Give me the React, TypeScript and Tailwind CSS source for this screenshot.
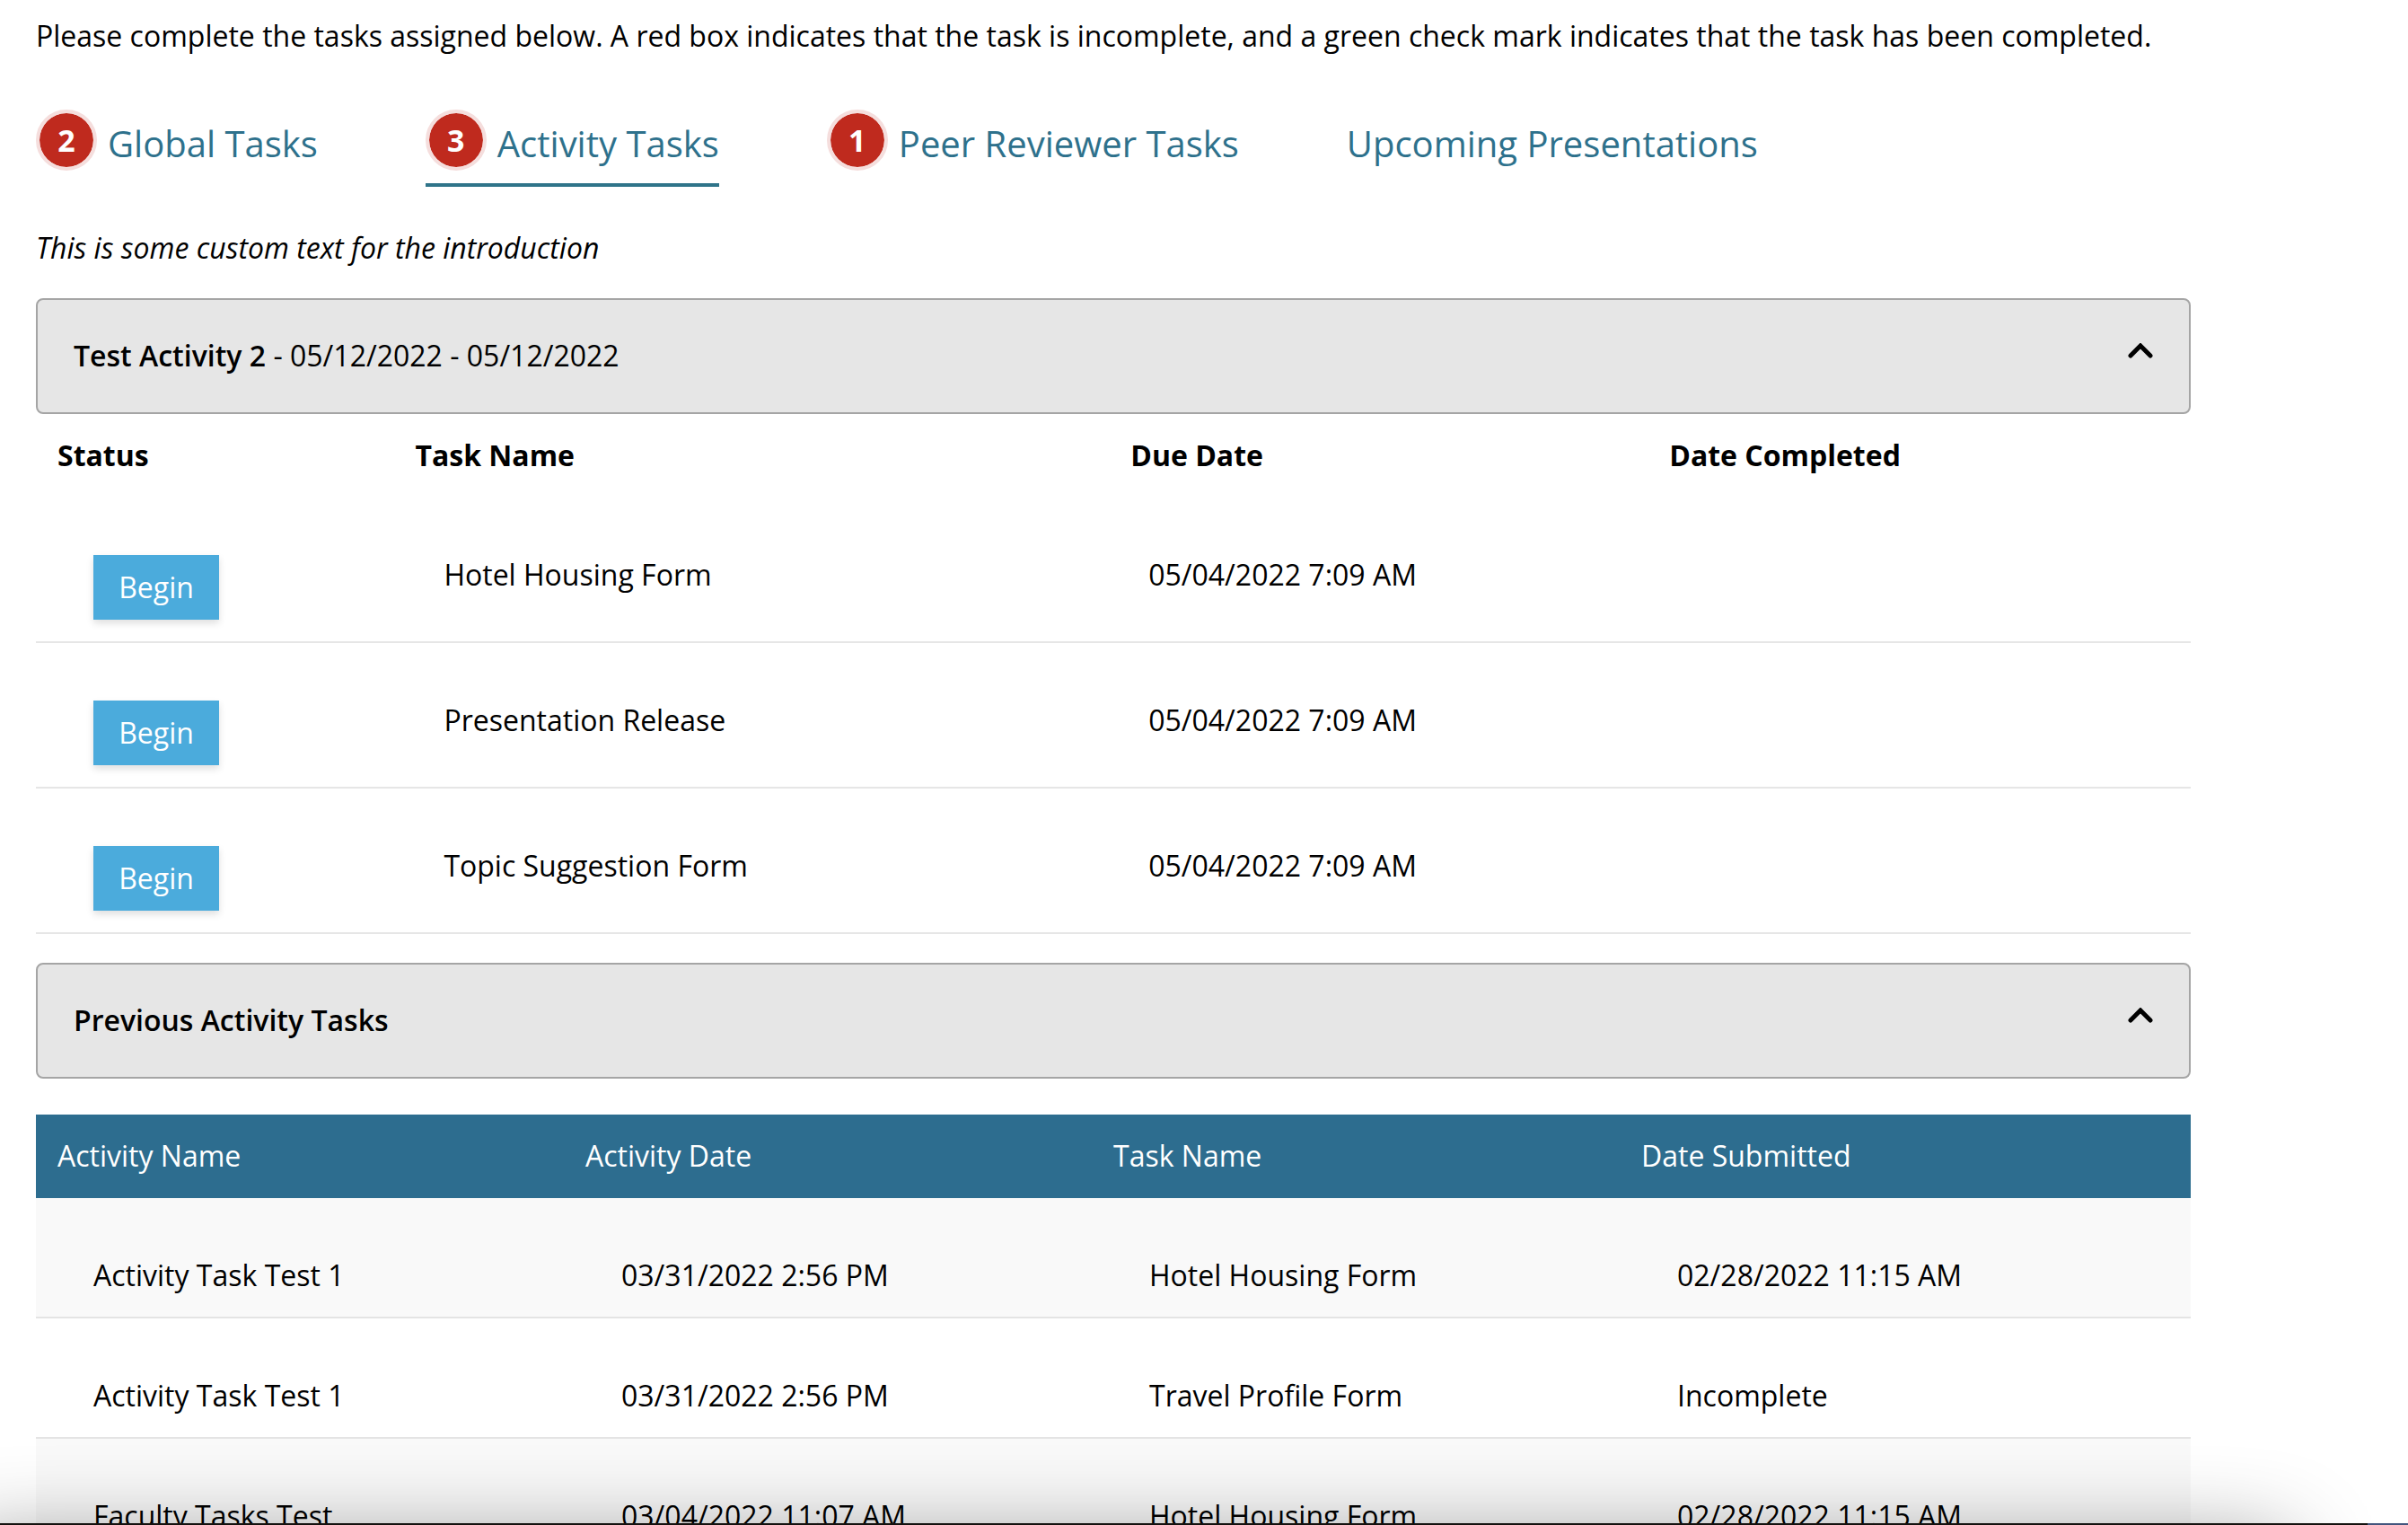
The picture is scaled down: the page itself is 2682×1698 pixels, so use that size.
import { useState } from "react";

const tabs = [
  { label: "Global Tasks", count: 2 },
  { label: "Activity Tasks", count: 3 },
  { label: "Peer Reviewer Tasks", count: 1 },
  { label: "Upcoming Presentations" },
];

const openTasks = [
  { name: "Hotel Housing Form", due: "05/04/2022 7:09 AM" },
  { name: "Presentation Release", due: "05/04/2022 7:09 AM" },
  { name: "Topic Suggestion Form", due: "05/04/2022 7:09 AM" },
];

const previousTasks = [
  ["Activity Task Test 1", "03/31/2022 2:56 PM", "Hotel Housing Form", "02/28/2022 11:15 AM"],
  ["Activity Task Test 1", "03/31/2022 2:56 PM", "Travel Profile Form", "Incomplete"],
  ["Faculty Tasks Test", "03/04/2022 11:07 AM", "Hotel Housing Form", "02/28/2022 11:15 AM"],
];

function Chevron({ open }: { open: boolean }) {
  return (
    <svg
      viewBox="0 0 28 17"
      className={open ? "mb-3 h-[17px] w-7" : "mb-3 h-[17px] w-7 rotate-180"}
      fill="none"
      stroke="currentColor"
      strokeWidth="5"
      strokeLinecap="round"
      aria-hidden="true"
    >
      <path d="M3 14 14 3 25 14" />
    </svg>
  );
}

function PanelHeader({
  title,
  detail,
  open,
  onToggle,
}: {
  title: string;
  detail?: string;
  open: boolean;
  onToggle: () => void;
}) {
  return (
    <button
      type="button"
      aria-expanded={open}
      onClick={onToggle}
      className="flex w-full items-center justify-between rounded-lg border-2 border-[#a5a5a5] bg-[#e6e6e6] px-10 pt-10 pb-[41px] text-left"
    >
      <span>
        <span className="font-semibold">{title}</span>
        {detail}
      </span>
      <Chevron open={open} />
    </button>
  );
}

export default function App() {
  const [active, setActive] = useState("Activity Tasks");
  const [currentOpen, setCurrentOpen] = useState(true);
  const [previousOpen, setPreviousOpen] = useState(true);

  return (
    <div className="relative h-screen overflow-hidden bg-white font-['Open_Sans',sans-serif] text-[32px] leading-[44px] text-black">
      <main className="mr-[242px] ml-10 pt-[18px]">
        <p>
          Please complete the tasks assigned below. A red box indicates that the task is incomplete, and a green check
          mark indicates that the task has been completed.
        </p>

        <nav className="mt-[60px] flex gap-[120px] text-[40px]">
          {tabs.map((tab) => (
            <a
              key={tab.label}
              href="#"
              onClick={() => setActive(tab.label)}
              className={
                tab.label === active
                  ? "flex h-[86px] items-start border-b-4 border-[#2f7489] text-[#2e718c]"
                  : "flex h-[86px] items-start text-[#2e718c]"
              }
            >
              {tab.count && (
                <span className="mr-3 flex size-[68px] items-center justify-center rounded-full border-4 border-[#f5dedd] bg-[#bf2a1e] bg-clip-padding text-[34px] font-bold text-white">
                  {tab.count}
                </span>
              )}
              <span className="pt-2.5 leading-[56px]">{tab.label}</span>
            </a>
          ))}
        </nav>

        <p className="mt-[46px] mb-[34px] italic">This is some custom text for the introduction</p>

        <PanelHeader
          title="Test Activity 2"
          detail=" - 05/12/2022 - 05/12/2022"
          open={currentOpen}
          onToggle={() => setCurrentOpen(!currentOpen)}
        />
        {currentOpen && (
          <table className="w-full table-fixed border-collapse text-left">
            <thead>
              <tr className="font-bold">
                <th className="w-[16.6%] px-6 pt-6 pb-[25px]">Status</th>
                <th className="w-[33.2%] px-6 pt-6 pb-[25px]">Task Name</th>
                <th className="w-[25%] px-6 pt-6 pb-[25px]">Due Date</th>
                <th className="px-6 pt-6 pb-[25px]">Date Completed</th>
              </tr>
            </thead>
            <tbody>
              {openTasks.map((task) => (
                <tr key={task.name} className="border-b-2 border-[#e6e6e6] align-top">
                  <td className="pt-16 pb-6 pl-16">
                    <button
                      type="button"
                      className="block h-[72px] w-[140px] bg-[#4babdc] text-white shadow-[0_4px_8px_rgba(0,0,0,0.13)]"
                    >
                      Begin
                    </button>
                  </td>
                  <td className="pt-16 pb-6 pl-14">{task.name}</td>
                  <td className="pt-16 pb-6 pl-11">{task.due}</td>
                  <td />
                </tr>
              ))}
            </tbody>
          </table>
        )}

        <div className="mt-8">
          <PanelHeader
            title="Previous Activity Tasks"
            open={previousOpen}
            onToggle={() => setPreviousOpen(!previousOpen)}
          />
        </div>
        {previousOpen && (
          <table className="mt-10 w-full table-fixed border-collapse text-left">
            <thead className="bg-[#2d6d8f] text-white">
              <tr>
                <th className="w-[24.5%] px-6 pt-6 pb-[25px] font-normal">Activity Name</th>
                <th className="w-[24.5%] px-6 pt-6 pb-[25px] font-normal">Activity Date</th>
                <th className="w-[24.5%] px-6 pt-6 pb-[25px] font-normal">Task Name</th>
                <th className="px-6 pt-6 pb-[25px] font-normal">Date Submitted</th>
              </tr>
            </thead>
            <tbody>
              {previousTasks.map((row, index) => (
                <tr key={index} className="border-b-2 border-[#e4e4e4] odd:bg-[#f9f9f9]">
                  {row.map((cell, column) => (
                    <td key={column} className="pt-16 pb-6 pl-16">
                      {cell}
                    </td>
                  ))}
                </tr>
              ))}
            </tbody>
          </table>
        )}
      </main>

      {/* Edge of the dock and the shadow that it casts on the page */}
      <div className="pointer-events-none absolute bottom-0 left-0 h-0.5 w-full bg-[#43557d]">
        <div className="absolute top-6 right-[135px] -left-12 h-40 shadow-[0_0_100px_rgba(0,0,0,0.45)]" />
        <div className="relative mr-[45px] h-full bg-[#14120f]" />
      </div>
    </div>
  );
}
